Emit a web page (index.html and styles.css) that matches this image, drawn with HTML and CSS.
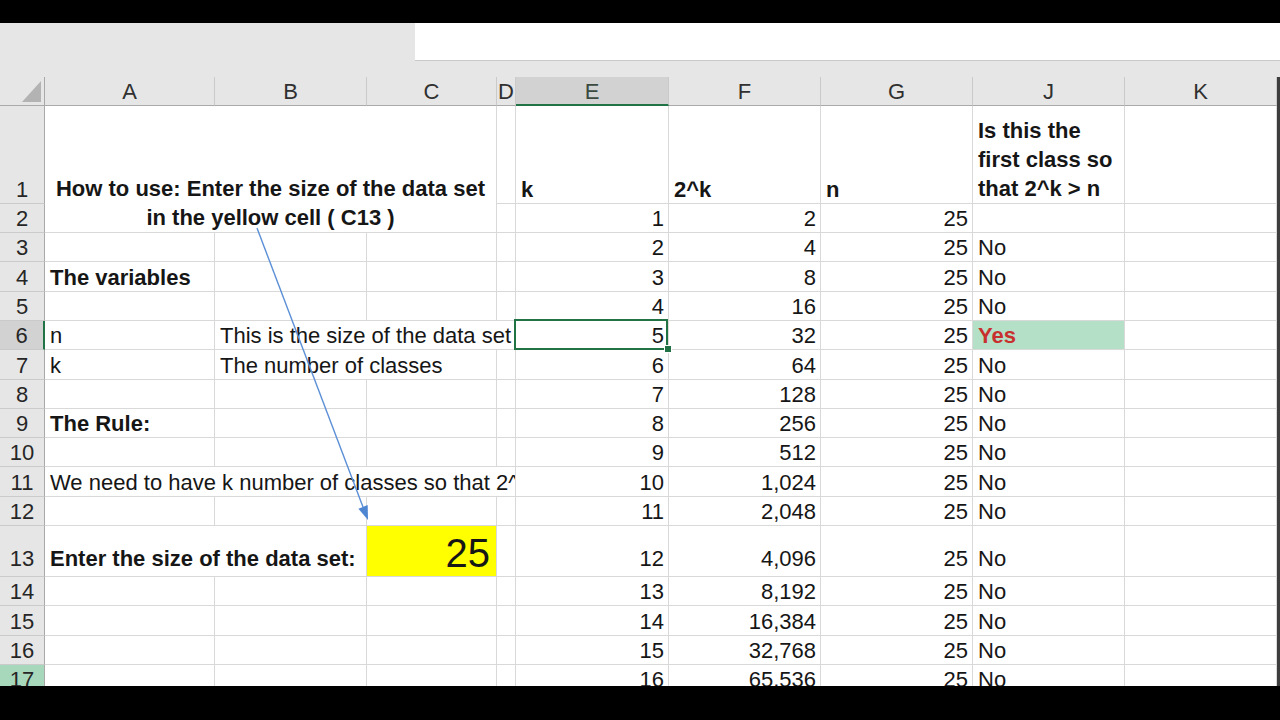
FILE: index.html
```html
<!DOCTYPE html>
<html lang="en">
<head>
<meta charset="utf-8">
<title>Number of classes</title>
<link rel="stylesheet" href="styles.css">
</head>
<body>
<div class="screen">
  <div class="topbar">
    <div class="namearea"></div>
    <div class="formula"></div>
  </div>
  <div class="sheet">
    <!-- header -->
    <div class="ch corner"><div class="tri"></div></div>
    <div class="ch">A</div>
    <div class="ch">B</div>
    <div class="ch">C</div>
    <div class="ch">D</div>
    <div class="ch sel">E</div>
    <div class="ch">F</div>
    <div class="ch">G</div>
    <div class="ch">J</div>
    <div class="ch">K</div>

    <!-- row 1 -->
    <div class="rh">1</div>
    <div class="c b title">How to use: Enter the size of the data set<br>in the yellow cell ( C13 )</div>
    <div class="c"></div>
    <div class="c b">k</div>
    <div class="c b">2^k</div>
    <div class="c b">n</div>
    <div class="c b wrap">Is this the<br>first class so<br>that 2^k &gt; n</div>
    <div class="c"></div>

    <!-- row 2 -->
    <div class="rh">2</div>
    <div class="c"></div>
    <div class="c n">1</div>
    <div class="c n">2</div>
    <div class="c n">25</div>
    <div class="c"></div>
    <div class="c"></div>

    <!-- row 3 -->
    <div class="rh">3</div>
    <div class="c"></div><div class="c"></div><div class="c"></div><div class="c"></div>
    <div class="c n">2</div>
    <div class="c n">4</div>
    <div class="c n">25</div>
    <div class="c">No</div>
    <div class="c"></div>

    <!-- row 4 -->
    <div class="rh">4</div>
    <div class="c b">The variables</div><div class="c"></div><div class="c"></div><div class="c"></div>
    <div class="c n">3</div>
    <div class="c n">8</div>
    <div class="c n">25</div>
    <div class="c">No</div>
    <div class="c"></div>

    <!-- row 5 -->
    <div class="rh">5</div>
    <div class="c"></div><div class="c"></div><div class="c"></div><div class="c"></div>
    <div class="c n">4</div>
    <div class="c n">16</div>
    <div class="c n">25</div>
    <div class="c">No</div>
    <div class="c"></div>

    <!-- row 6 -->
    <div class="rh sel">6</div>
    <div class="c">n</div>
    <div class="c span3">This is the size of the data set</div>
    <div class="c n cur">5</div>
    <div class="c n">32</div>
    <div class="c n">25</div>
    <div class="c b yes">Yes</div>
    <div class="c"></div>

    <!-- row 7 -->
    <div class="rh">7</div>
    <div class="c">k</div>
    <div class="c span2">The number of classes</div>
    <div class="c"></div>
    <div class="c n">6</div>
    <div class="c n">64</div>
    <div class="c n">25</div>
    <div class="c">No</div>
    <div class="c"></div>

    <!-- row 8 -->
    <div class="rh">8</div>
    <div class="c"></div><div class="c"></div><div class="c"></div><div class="c"></div>
    <div class="c n">7</div>
    <div class="c n">128</div>
    <div class="c n">25</div>
    <div class="c">No</div>
    <div class="c"></div>

    <!-- row 9 -->
    <div class="rh">9</div>
    <div class="c b">The Rule:</div><div class="c"></div><div class="c"></div><div class="c"></div>
    <div class="c n">8</div>
    <div class="c n">256</div>
    <div class="c n">25</div>
    <div class="c">No</div>
    <div class="c"></div>

    <!-- row 10 -->
    <div class="rh">10</div>
    <div class="c"></div><div class="c"></div><div class="c"></div><div class="c"></div>
    <div class="c n">9</div>
    <div class="c n">512</div>
    <div class="c n">25</div>
    <div class="c">No</div>
    <div class="c"></div>

    <!-- row 11 -->
    <div class="rh">11</div>
    <div class="c span4">We need to have k number of classes so that 2^</div>
    <div class="c n">10</div>
    <div class="c n">1,024</div>
    <div class="c n">25</div>
    <div class="c">No</div>
    <div class="c"></div>

    <!-- row 12 -->
    <div class="rh">12</div>
    <div class="c"></div><div class="c"></div><div class="c"></div><div class="c"></div>
    <div class="c n">11</div>
    <div class="c n">2,048</div>
    <div class="c n">25</div>
    <div class="c">No</div>
    <div class="c"></div>

    <!-- row 13 -->
    <div class="rh r13">13</div>
    <div class="c b span2 r13">Enter the size of the data set:</div>
    <div class="c n yellow">25</div>
    <div class="c"></div>
    <div class="c n r13">12</div>
    <div class="c n r13">4,096</div>
    <div class="c n r13">25</div>
    <div class="c r13">No</div>
    <div class="c"></div>

    <!-- row 14 -->
    <div class="rh">14</div>
    <div class="c"></div><div class="c"></div><div class="c"></div><div class="c"></div>
    <div class="c n">13</div>
    <div class="c n">8,192</div>
    <div class="c n">25</div>
    <div class="c">No</div>
    <div class="c"></div>

    <!-- row 15 -->
    <div class="rh">15</div>
    <div class="c"></div><div class="c"></div><div class="c"></div><div class="c"></div>
    <div class="c n">14</div>
    <div class="c n">16,384</div>
    <div class="c n">25</div>
    <div class="c">No</div>
    <div class="c"></div>

    <!-- row 16 -->
    <div class="rh">16</div>
    <div class="c"></div><div class="c"></div><div class="c"></div><div class="c"></div>
    <div class="c n">15</div>
    <div class="c n">32,768</div>
    <div class="c n">25</div>
    <div class="c">No</div>
    <div class="c"></div>

    <!-- row 17 -->
    <div class="rh hl">17</div>
    <div class="c"></div><div class="c"></div><div class="c"></div><div class="c"></div>
    <div class="c n">16</div>
    <div class="c n">65,536</div>
    <div class="c n">25</div>
    <div class="c">No</div>
    <div class="c"></div>

    <svg class="arrow" width="1277" height="617" viewBox="0 0 1277 617" aria-hidden="true">
      <line x1="257" y1="151" x2="363" y2="430" stroke="#5b8fd6" stroke-width="1.4"/>
      <polygon points="368,443 358.4,431.7 367.7,428.1" fill="#4f86d2"/>
    </svg>
  </div>
</div>
</body>
</html>
```

FILE: styles.css
```css
html, body {
  margin: 0;
  padding: 0;
  background: #000;
  width: 1280px;
  height: 720px;
  overflow: hidden;
}

.screen {
  margin-top: 23px;
  width: 1280px;
  height: 663px;
  overflow: hidden;
  background: #e6e6e6;
  font-family: "Liberation Sans", Arial, sans-serif;
  font-size: 22px;
  color: #161616;
}

.topbar {
  display: flex;
  height: 54px;
  background: #e6e6e6;
}

.namearea {
  width: 415px;
  flex: none;
}

.formula {
  flex: 1;
  height: 38px;
  background: #fff;
  border-bottom: 1px solid #c9c9c9;
  box-sizing: border-box;
}

.sheet {
  position: relative;
  display: grid;
  width: 1280px;
  box-sizing: border-box;
  border-right: 3px solid #3d3d3d;
  grid-template-columns: 45px 170px 152px 130px 19px 153px 152px 152px 152px 152px;
  grid-template-rows: 29px 98px 29px 29px 30px 29px 29px 30px 29px 29px 29px 30px 29px 51px 29px 30px 29px 29px;
  background: #fff;
}

.sheet > div {
  box-sizing: border-box;
  min-width: 0;
}

/* column headers */
.ch {
  background: #e6e6e6;
  border-right: 1px solid #cacaca;
  border-bottom: 1px solid #a9a9a9;
  display: flex;
  align-items: center;
  justify-content: center;
  color: #303030;
  font-size: 22px;
  padding-top: 2px;
}

.ch.sel {
  background: #d2d2d2;
  border-bottom: 2px solid #217346;
  color: #3a4a40;
}

.corner {
  justify-content: flex-end;
  align-items: flex-end;
  padding: 0 3px 3px 0;
  border-right-color: #a9a9a9;
}

.tri {
  width: 19px;
  height: 21px;
  background: #b3b3b3;
  clip-path: polygon(100% 0, 100% 100%, 0 100%);
}

/* row headers */
.rh {
  background: #e6e6e6;
  border-right: 1px solid #a9a9a9;
  border-bottom: 1px solid #cacaca;
  display: flex;
  align-items: flex-end;
  justify-content: center;
  line-height: 25px;
  padding-bottom: 1px;
  color: #262626;
}

.rh.sel {
  background: #d2d2d2;
  border-right: 2px solid #217346;
}

.rh.hl {
  background: #a7d8bb;
}

/* cells */
.c {
  border-right: 1px solid #d9d9d9;
  border-bottom: 1px solid #d9d9d9;
  display: flex;
  align-items: flex-end;
  padding: 0 4px 1px 5px;
  line-height: 25px;
  white-space: nowrap;
  overflow: hidden;
}

.n {
  justify-content: flex-end;
}

.b {
  font-weight: bold;
}

.title {
  grid-column: span 3;
  grid-row: span 2;
  justify-content: center;
  text-align: center;
  line-height: 29px;
  padding: 0 4px 0 4px;
}

.wrap {
  line-height: 29px;
  padding-bottom: 0;
}

.span2 {
  grid-column: span 2;
}

.span3 {
  grid-column: span 3;
}

.span4 {
  grid-column: span 4;
}

.r13 {
  padding-bottom: 5px;
}

.yellow {
  background: #ffff00;
  font-size: 40px;
  line-height: 40px;
  padding: 0 6px 3px 0;
}

.yes {
  background: #b5e0c8;
  color: #c8302e;
}

.cur {
  position: relative;
  overflow: visible;
}

.cur::before {
  content: "";
  position: absolute;
  left: -2px;
  top: -2px;
  right: 0;
  bottom: -1px;
  border: 2px solid #217346;
}

.cur::after {
  content: "";
  position: absolute;
  right: -4px;
  bottom: -4px;
  width: 6px;
  height: 6px;
  background: #217346;
  border: 1px solid #fff;
}

.arrow {
  position: absolute;
  left: 0;
  top: 0;
  pointer-events: none;
  z-index: 2;
}
```
